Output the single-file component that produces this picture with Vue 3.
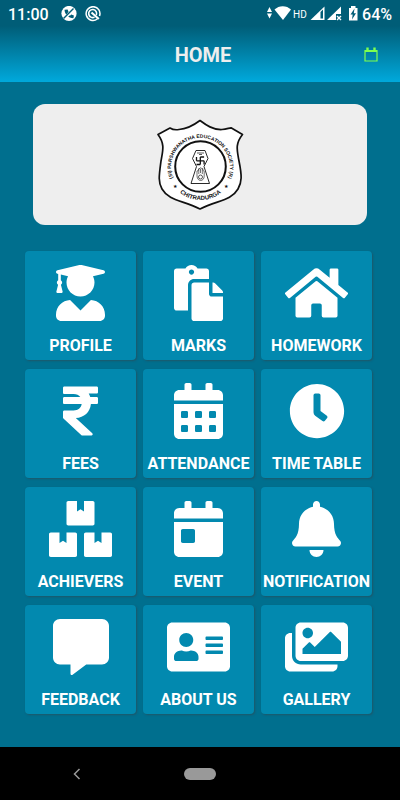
<template>
  <div class="page">
    <header class="header">
      <!-- status bar -->
      <div class="status">
        <span class="time">11:00</span>
        <svg class="badge" viewBox="0 0 16 16" aria-hidden="true">
          <circle cx="8" cy="7.5" r="7.6" fill="#fff" />
          <path d="M3.500 3.800c.2 4.600 4 8.300 8.900 8.500l.5-2.700-2.700-1-1.200 1.100c-1.200-.7-2-1.500-2.500-2.600l1.100-1.200-1-2.500z" fill="#005d77" />
          <path d="M3.200 12.700L13 2.800" stroke="#fff" stroke-width="3" />
          <path d="M2.500 12.500L12.500 2.500" stroke="#005d77" stroke-width="1.500" />
        </svg>
        <svg class="badge" viewBox="0 0 16 16" aria-hidden="true">
          <g fill="none" stroke="#fff">
            <path d="M12.300 13A6.900 6.900 0 1 1 14.500 10" stroke-width="1.500" />
            <path d="M11.300 9.200A4 4 0 1 0 9.500 11.100" stroke-width="1.600" />
            <path d="M6.500 6.500l7.300 6.500" stroke-width="2.200" />
          </g>
        </svg>
        <svg class="signals" viewBox="0 0 92 18" aria-hidden="true">
          <path d="M0 7l2.500-5L5 7zM0 8.500h5L2.500 13.500z" fill="#fff" />
          <path d="M7.500 4.500C12 0 19.500 0 24 4.500L16 15z" fill="#fff" />
          <text x="26" y="13" class="hd">HD</text>
          <path d="M43.500 15L57.500 1.500V15z" fill="#fff" />
          <path d="M53.500 7l2.500-2.500v9h-2.500z" fill="#005d77" />
          <path d="M60 15L74 1.500V9h-5v6z" fill="#fff" />
          <path d="M70 11l4 4m0-4l-4 4" stroke="#fff" stroke-width="1.400" />
          <path d="M82 3h2V1h4.500v2h2v12.500H82z" fill="#fff" />
          <path d="M87.500 3.500L83.500 9.500h2.200l-.7 5 4-6.200h-2.200z" fill="#005d77" />
        </svg>
        <span class="battery">64%</span>
      </div>
      <!-- title bar -->
      <div class="bar">
        <h1>HOME</h1>
        <button class="calendar" type="button" aria-label="Calendar">
          <svg viewBox="0 0 14 16">
            <path d="M1 3.500h12v10.500H1zM1 4.500h12" />
            <path d="M3.500 .5v3.500M10.500 .5v3.500" stroke-width="2.400" />
          </svg>
        </button>
      </div>
    </header>

    <main>
      <section class="card">
        <svg class="logo" viewBox="16 18 88 93" role="img">
          <defs>
            <path id="arcTop" d="M37.200 85.500A29.500 29.500 0 1 1 83.800 85.500" />
            <path id="arcBottom" d="M27 66.500A33.500 33.500 0 0 0 94 66.500" />
          </defs>
          <path
            d="M60 20.500C66 25 73 30 82 29.500C87 29.200 89 27.800 91 27.800L102.500 34.500C95 44 97 50 99 61C102 76 102 82 98 89C91 101 78 100 60 109C42 100 29 101 22 89C18 82 19 76 21 61C23 50 25 44 18 34.500L30 28C33 30 36 30 39 29.500C47 29 54 25 60 20.500Z"
            fill="#fff" stroke="#111" stroke-width="1.700" stroke-linejoin="round"
          />
          <circle cx="60.500" cy="66.500" r="25.300" fill="none" stroke="#111" stroke-width="2" />
          <text class="ring"><textPath href="#arcTop" startOffset="50%" text-anchor="middle">(SI) PARSHWANATHA EDUCATION SOCIETY (R)</textPath></text>
          <text class="town"><textPath href="#arcBottom" startOffset="50%" text-anchor="middle">CHITRADURGA</textPath></text>
          <text class="star" x="33" y="88">★</text>
          <text class="star" x="84" y="88">★</text>
          <g fill="none" stroke="#111" stroke-width=".9">
            <path d="M56 50.500h9l3 8-4 8 5.500 17H51l5.500-17-4-8z" />
            <path d="M60.300 57v7.500M56.500 60.800h7.600M60.300 57h3.800M64.100 60.800v3.700M60.300 64.500h-3.800M56.500 60.800V57" stroke-width="1.300" />
            <path d="M57 53h7M59 54.500h3" stroke-width=".7" />
            <path d="M57 76v-5l1.300-.5.5-2 1.300 0 .4-.8 1.300.8 1 0 .2 2 1.200.8V76c0 6-7 6-7.200 0zM58.800 69v5M60.500 69v4M62.300 69v5" stroke-width=".6" />
            <circle cx="60.500" cy="77" r="2" stroke-width=".7" />
          </g>
        </svg>
      </section>

      <nav class="grid">
        <button v-for="item in menu" :key="item.label" class="tile" type="button">
          <svg :viewBox="`0 0 ${item.width} 512`" aria-hidden="true">
            <path :d="item.icon" />
          </svg>
          <span>{{ item.label }}</span>
        </button>
      </nav>
    </main>

    <!-- system navigation -->
    <footer class="system">
      <button class="back" type="button" aria-label="Back">
        <svg viewBox="0 0 8 12"><path d="M6.500 1L1.500 6l5 5" /></svg>
      </button>
      <button class="pill" type="button" aria-label="Home screen"></button>
      <span></span>
    </footer>
  </div>
</template>

<script setup>
const calendarTop =
  "M400 64h-48V16c0-8.800-7.200-16-16-16h-32c-8.800 0-16 7.200-16 16v48H160V16c0-8.800-7.200-16-16-16h-32c-8.800 0-16 7.200-16 16v48H48C21.500 64 0 85.500 0 112v48h448v-48c0-26.500-21.500-48-48-48z";

// small square hole in the calendar sheet
const day = (x, y) =>
  `M${x} ${y + 12}c0-6.600 5.400-12 12-12h40c6.600 0 12 5.400 12 12v40c0 6.600-5.400 12-12 12h-40c-6.600 0-12-5.400-12-12z`;

// one text line on the address card
const line = (y) =>
  `M512 ${y}c0 4.400-3.600 8-8 8H360c-4.400 0-8-3.600-8-8v-16c0-4.400 3.600-8 8-8h144c4.400 0 8 3.600 8 8z`;

const days = [64, 192, 320].map((x) => day(x, 256) + day(x, 384)).join("");

const menu = [
  {
    label: "PROFILE",
    width: 448,
    icon: "M319.4 320.6L224 416l-95.4-95.4C57.1 323.7 0 382.2 0 454.4v9.6c0 26.5 21.5 48 48 48h352c26.5 0 48-21.5 48-48v-9.6c0-72.2-57.1-130.7-128.6-133.8zM13.6 79.8l6.4 1.5v58.4c-7 4.2-12 11.5-12 20.3 0 8.4 4.6 15.4 11.1 19.7L3.5 242c-1.7 6.9 2.1 14 7.6 14h41.8c5.5 0 9.3-7.1 7.6-14l-15.6-62.3C51.4 175.4 56 168.4 56 160c0-8.8-5-16.1-12-20.3V87.1l66 15.9c-8.6 17.2-14 36.4-14 57 0 70.7 57.3 128 128 128s128-57.3 128-128c0-20.6-5.3-39.8-14-57l96.3-23.2c18.2-4.4 18.2-27.1 0-31.5l-190.4-46c-13-3.1-26.7-3.1-39.7 0L13.6 48.2c-18.1 4.4-18.1 27.2 0 31.6z",
  },
  {
    label: "MARKS",
    width: 448,
    icon: "M128 184c0-30.879 25.122-56 56-56h136V56c0-13.255-10.745-24-24-24h-80.61C204.306 12.89 183.637 0 160 0s-44.306 12.89-55.39 32H24C10.745 32 0 42.745 0 56v336c0 13.255 10.745 24 24 24h104V184zm32-144c13.255 0 24 10.745 24 24s-10.745 24-24 24-24-10.745-24-24 10.745-24 24-24zm184 248h104v200c0 13.255-10.745 24-24 24H184c-13.255 0-24-10.745-24-24V184c0-13.255 10.745-24 24-24h136v104c0 13.2 10.8 24 24 24zm104-38.059V256h-96v-96h6.059a24 24 0 0 1 16.97 7.029l65.941 65.941a24.002 24.002 0 0 1 7.03 16.971z",
  },
  {
    label: "HOMEWORK",
    width: 576,
    icon: "M280.37 148.26L96 300.11V464a16 16 0 0 0 16 16l112.06-.29a16 16 0 0 0 15.92-16V368a16 16 0 0 1 16-16h64a16 16 0 0 1 16 16v95.64a16 16 0 0 0 16 16.05L464 480a16 16 0 0 0 16-16V300L295.67 148.26a12.19 12.19 0 0 0-15.3 0zM571.6 251.47L488 182.56V44.05a12 12 0 0 0-12-12h-56a12 12 0 0 0-12 12v72.61L318.47 43a48 48 0 0 0-61 0L4.34 251.47a12 12 0 0 0-1.6 16.9l25.5 31A12 12 0 0 0 45.15 301l235.22-193.74a12.19 12.19 0 0 1 15.3 0L530.9 301a12 12 0 0 0 16.9-1.6l25.5-31a12 12 0 0 0-1.7-16.93z",
  },
  {
    label: "FEES",
    width: 320,
    icon: "M308 96c6.627 0 12-5.373 12-12V44c0-6.627-5.373-12-12-12H12C5.373 32 0 37.373 0 44v44.748c0 6.627 5.373 12 12 12h85.28c27.308 0 48.261 9.958 60.97 27.252H12c-6.627 0-12 5.373-12 12v40c0 6.627 5.373 12 12 12h158.757c-6.217 36.086-32.361 58.632-74.757 58.632H12c-6.627 0-12 5.373-12 12v53.012c0 3.349 1.4 6.546 3.861 8.818l165.052 152.356a12.001 12.001 0 0 0 8.139 3.182h82.562c10.924 0 16.166-13.408 8.139-20.818L116.871 319.906c76.499-2.34 131.144-53.395 138.318-127.906H308c6.627 0 12-5.373 12-12v-40c0-6.627-5.373-12-12-12h-58.69c-3.486-11.541-8.28-22.246-14.252-32H308z",
  },
  {
    label: "ATTENDANCE",
    width: 448,
    icon: "M0 464c0 26.5 21.5 48 48 48h352c26.5 0 48-21.5 48-48V192H0v272z" + days + calendarTop,
  },
  {
    label: "TIME TABLE",
    width: 512,
    icon: "M256 8C119 8 8 119 8 256S119 504 256 504 504 393 504 256 393 8 256 8Zm92.49 313l-20 25a16 16 0 0 1-22.49 2.5l-67-49.72a40 40 0 0 1-15-31.23V112a16 16 0 0 1 16-16h32a16 16 0 0 1 16 16V256l58 42.5A16 16 0 0 1 348.49 321Z",
  },
  {
    label: "ACHIEVERS",
    width: 576,
    icon: "M560 288h-80v96l-32-21.3-32 21.3v-96h-80c-8.8 0-16 7.2-16 16v192c0 8.8 7.2 16 16 16h224c8.8 0 16-7.2 16-16V304c0-8.8-7.2-16-16-16zm-384-64h224c8.8 0 16-7.2 16-16V16c0-8.8-7.2-16-16-16h-80v96l-32-21.3L256 96V0h-80c-8.8 0-16 7.2-16 16v192c0 8.8 7.2 16 16 16zm64 64h-80v96l-32-21.3L96 384v-96H16c-8.8 0-16 7.2-16 16v192c0 8.8 7.2 16 16 16h224c8.8 0 16-7.2 16-16V304c0-8.8-7.2-16-16-16z",
  },
  {
    label: "EVENT",
    width: 448,
    icon:
      "M0 464c0 26.5 21.5 48 48 48h352c26.5 0 48-21.5 48-48V192H0v272zm64-192c0-8.8 7.2-16 16-16h96c8.8 0 16 7.2 16 16v96c0 8.8-7.2 16-16 16H80c-8.8 0-16-7.2-16-16v-96z" +
      calendarTop,
  },
  {
    label: "NOTIFICATION",
    width: 448,
    icon: "M224 512c35.32 0 63.97-28.65 63.97-64H160.03c0 35.35 28.65 64 63.97 64zm215.39-149.71c-19.32-20.76-55.47-51.99-55.47-154.29 0-77.7-54.48-139.9-127.94-155.16V32c0-17.67-14.32-32-31.98-32s-31.98 14.33-31.98 32v20.84C118.56 68.1 64.08 130.3 64.08 208c0 102.3-36.15 133.53-55.47 154.29-6 6.45-8.66 14.16-8.61 21.71.11 16.4 12.98 32 32.1 32h383.8c19.12 0 32-15.6 32.1-32 .05-7.55-2.61-15.27-8.61-21.71z",
  },
  {
    label: "FEEDBACK",
    width: 512,
    icon: "M448 0H64C28.7 0 0 28.7 0 64v288c0 35.3 28.7 64 64 64h96v84c0 9.8 11.2 15.5 19.1 9.7L304 416h144c35.3 0 64-28.7 64-64V64c0-35.3-28.7-64-64-64z",
  },
  {
    label: "ABOUT US",
    width: 576,
    icon:
      "M528 32H48C21.5 32 0 53.5 0 80v352c0 26.5 21.5 48 48 48h480c26.5 0 48-21.5 48-48V80c0-26.5-21.5-48-48-48zm-352 96c35.3 0 64 28.7 64 64s-28.7 64-64 64-64-28.7-64-64 28.7-64 64-64zm112 236.800c0 10.600-10 19.200-22.400 19.200H86.400C74 384 64 375.400 64 364.800v-19.200c0-31.800 30.100-57.600 67.200-57.600h5c12.300 5.100 25.700 8 39.800 8s27.600-2.900 39.800-8h5c37.100 0 67.200 25.800 67.200 57.600v19.200z" +
      line(184) + line(248) + line(312),
  },
  {
    label: "GALLERY",
    width: 576,
    icon: "M480 416v16c0 26.51-21.49 48-48 48H48c-26.51 0-48-21.49-48-48V176c0-26.51 21.49-48 48-48h16v208c0 44.112 35.888 80 80 80h336zm96-80V80c0-26.51-21.49-48-48-48H144c-26.51 0-48 21.49-48 48v256c0 26.51 21.49 48 48 48h384c26.51 0 48-21.49 48-48zM256 128c0 26.51-21.49 48-48 48s-48-21.49-48-48 21.49-48 48-48 48 21.49 48 48zm-96 144l55.515-55.515c4.686-4.686 12.284-4.686 16.971 0L272 256l135.515-135.515c4.686-4.686 12.284-4.686 16.971 0L512 208v112H160v-48z",
  },
];
</script>

<style>
body {
  background: #006f8e;
}
</style>

<style scoped>
.page {
  min-height: 100vh;
  display: flex;
  flex-direction: column;
  background: #006f8e;
  font-family: Roboto, "Liberation Sans", sans-serif;
}

button {
  border: 0;
  padding: 0;
  background: none;
  font-family: inherit;
  cursor: pointer;
}

svg {
  display: block;
}

.header {
  height: 82px;
  color: #fff;
  background: linear-gradient(#005d77 0, #005d77 26px, #00a9dc 100%);
}

.status {
  height: 28px;
  padding: 0 8px;
  display: flex;
  align-items: center;
  font-size: 16px;
  font-weight: 500;
}

.badge {
  width: 16px;
  height: 16px;
  margin-left: 8px;
}

.time {
  margin-right: 4px;
}

.signals {
  width: 92px;
  height: 18px;
  margin-left: auto;
  margin-right: 3px;
}

.hd {
  font-size: 10px;
  font-weight: 400;
  fill: #fff;
}

.bar {
  height: 54px;
  padding: 0 22px;
  display: grid;
  grid-template-columns: 1fr auto 1fr;
  align-items: center;
}

.bar h1 {
  grid-column: 2;
  margin: 0;
  padding-left: 6px;
  font-size: 20px;
  font-weight: 700;
  color: #eee;
}

.calendar {
  justify-self: end;
}

.calendar svg {
  width: 14px;
  height: 16px;
  fill: none;
  stroke: #7dff4f;
  stroke-width: 1.2;
}

.card {
  height: 121px;
  margin: 22px 33px 26px;
  display: flex;
  align-items: center;
  justify-content: center;
  border-radius: 12px;
  background: #eee;
}

.logo {
  width: 88px;
  height: 93px;
}

.ring,
.town,
.star {
  font-family: "Liberation Sans", Arial, sans-serif;
  font-weight: 700;
  font-size: 5px;
  fill: #111;
}

.town {
  font-size: 6px;
}

.star {
  font-family: "DejaVu Sans", sans-serif;
}

.grid {
  display: grid;
  grid-template-columns: repeat(3, minmax(0, 1fr));
  gap: 9px 7px;
  padding: 0 28px 33px 25px;
}

.tile {
  height: 109px;
  padding-top: 14px;
  display: flex;
  flex-direction: column;
  align-items: center;
  justify-content: flex-start;
  border-radius: 4px;
  background: #0289af;
  box-shadow: 1px 1px 2px rgba(50, 70, 80, 0.6);
  color: #fff;
  font-size: 16px;
  font-weight: 700;
  line-height: 20px;
  white-space: nowrap;
}

.tile svg {
  height: 56px;
  margin-bottom: 15px;
  fill: #fff;
  fill-rule: evenodd;
}

.system {
  height: 53px;
  margin-top: auto;
  display: grid;
  grid-template-columns: 1fr auto 1fr;
  align-items: center;
  background: #000;
}

.back {
  justify-self: center;
  padding-right: 30px;
}

.back svg {
  width: 8px;
  height: 12px;
  fill: none;
  stroke: #999;
  stroke-width: 1.5;
}

.pill {
  width: 32px;
  height: 12px;
  border-radius: 6px;
  background: #999;
}
</style>
